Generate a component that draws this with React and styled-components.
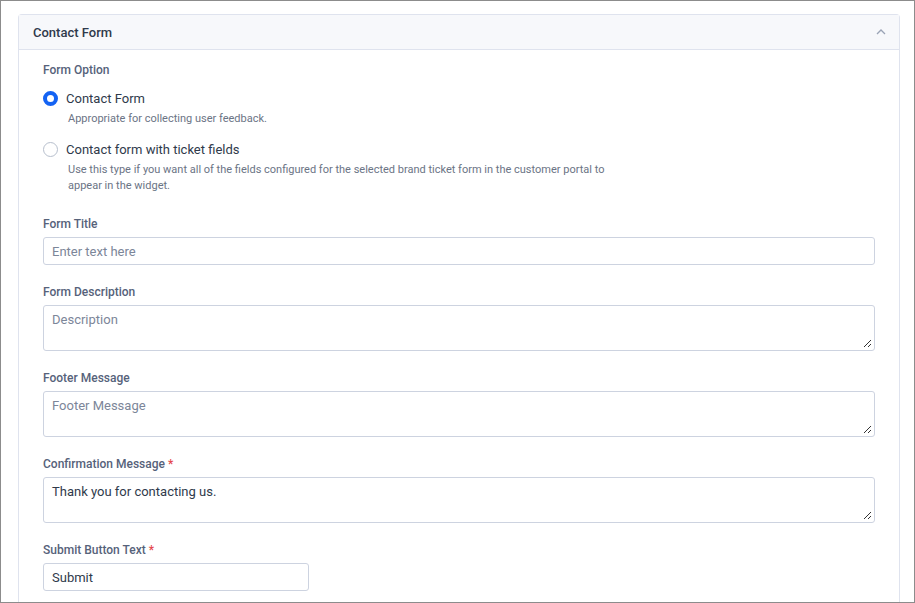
import React from "react";
import styled, { createGlobalStyle } from "styled-components";

const Global = createGlobalStyle`
  html, body { margin: 0; padding: 0; background: #fff; }
  body { font-family: Roboto, "Noto Sans", Arial, sans-serif; }
  * { box-sizing: border-box; }
`;

const Frame = styled.div`
  width: 915px; height: 603px; border: 1px solid #8c8c8c; overflow: hidden;
  padding: 13px 14px 0 17px; background: #fff;
`;
const Card = styled.div`
  border: 1px solid #dfe3ee; border-bottom: none; border-radius: 4px 4px 0 0; height: 620px;
`;
const Header = styled.div`
  height: 35px; background: #f7f8fb; border-bottom: 1px solid #dfe3ee;
  display: flex; align-items: center; justify-content: space-between; padding: 0 13px 0 14px;
  font-size: 13px; font-weight: 500; color: #2f3a4b;
`;
const Body = styled.div`
  padding: 12px 24px 0 24px;
  display: flex; flex-direction: column;
`;
const Label = styled.div`
  font-size: 12px; font-weight: 500; color: #56627a; line-height: 16px;
  margin-bottom: ${p => p.$mb || 5}px;
  span { color: #e5484d; }
`;
const RadioRow = styled.div`
  display: flex; align-items: center; gap: 8px; height: 20px; margin-top: ${p => p.$mt}px;
  font-size: 13px; color: #2f3a4b;
`;
const Radio = styled.span`
  width: 15px; height: 15px; border-radius: 50%;
  border: ${p => p.$on ? "4px solid #1463f3" : "1px solid #b7bfcd"}; background: #fff;
`;
const Desc = styled.div`
  font-size: 11px; color: #6b7485; line-height: 16px; margin: 3px 0 0 25px; max-width: 570px;
`;
const Field = styled.div`
  margin-top: ${p => p.$mt ?? 19}px;
`;
const Input = styled.div`
  height: 28px; width: ${p => p.$w || "100%"}; border: 1px solid #cdd3e0; border-radius: 3px;
  padding: 0 8px; display: flex; align-items: center; font-size: 13px;
  color: ${p => p.$ph ? "#7c8699" : "#2f3a4b"};
`;
const Area = styled.div`
  position: relative; height: 46px; border: 1px solid #cdd3e0; border-radius: 3px;
  padding: 6px 8px; font-size: 13px; line-height: 16px;
  color: ${p => p.$ph ? "#7c8699" : "#2f3a4b"};
`;
const Grip = styled.svg`
  position: absolute; right: 2px; bottom: 2px;
`;

const TextArea = ({ children, ph }) => (
  <Area $ph={ph}>
    {children}
    <Grip width="10" height="10" viewBox="0 0 10 10">
      <path d="M9 2L2 9M9 6L6 9" stroke="#333" strokeWidth="1" />
    </Grip>
  </Area>
);

export default function App() {
  return (
    <>
      <Global />
      <Frame>
        <Card>
          <Header>
            Contact Form
            <svg width="10" height="6" viewBox="0 0 10 6"><path d="M1 5l4-4 4 4" fill="none" stroke="#9aa3b5" strokeWidth="1.3" /></svg>
          </Header>
          <Body>
            <Label $mb={10}>Form Option</Label>
            <RadioRow><Radio $on />Contact Form</RadioRow>
            <Desc>Appropriate for collecting user feedback.</Desc>
            <RadioRow $mt={12}><Radio />Contact form with ticket fields</RadioRow>
            <Desc>Use this type if you want all of the fields configured for the selected brand ticket form in the customer portal to appear in the widget.</Desc>
            <Field $mt={22}>
              <Label>Form Title</Label>
              <Input $ph>Enter text here</Input>
            </Field>
            <Field>
              <Label>Form Description</Label>
              <TextArea ph>Description</TextArea>
            </Field>
            <Field>
              <Label>Footer Message</Label>
              <TextArea ph>Footer Message</TextArea>
            </Field>
            <Field>
              <Label>Confirmation Message <span>*</span></Label>
              <TextArea>Thank you for contacting us.</TextArea>
            </Field>
            <Field>
              <Label>Submit Button Text <span>*</span></Label>
              <Input $w="266px">Submit</Input>
            </Field>
          </Body>
        </Card>
      </Frame>
    </>
  );
}
